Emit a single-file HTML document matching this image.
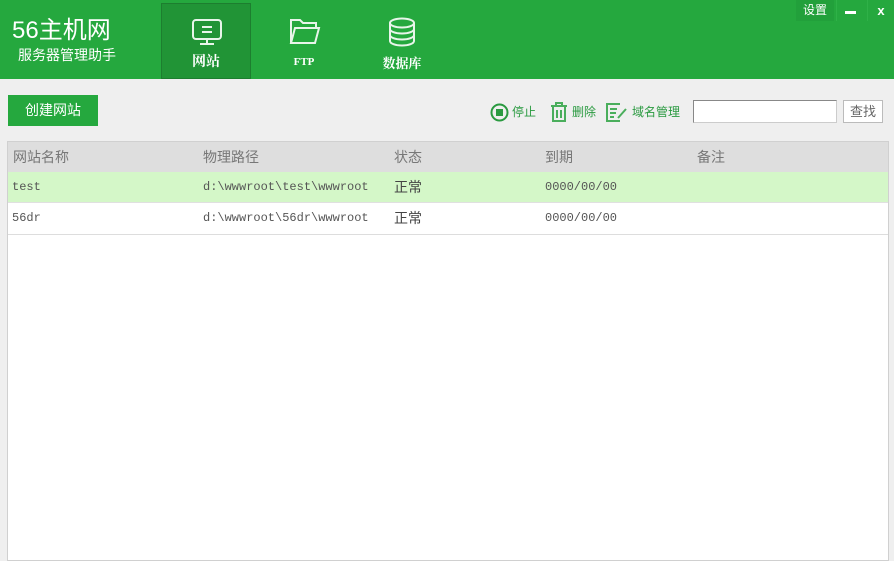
<!DOCTYPE html>
<html><head><meta charset="utf-8"><style>
*{margin:0;padding:0;box-sizing:border-box}
body{width:894px;height:549px;background:#efefef;position:relative;overflow:hidden;font-family:"Liberation Sans","Noto Sans CJK SC",sans-serif}
.hd{position:absolute;left:0;top:0;width:894px;height:79px;background:#25a83e}
.abs{position:absolute}
.logo{left:12px;top:10px;color:#fff;font-size:24px}
.sub{left:18px;top:45px;color:#fff;font-size:14px}
.tab{top:3px;width:90px;height:76px;color:#fff;text-align:center}
.act{left:161px;background:#219436;border:1px solid #1d7e2f}
.tl{position:absolute;width:100%;font-weight:bold;font-family:"Liberation Serif","Noto Serif CJK SC",serif}
.wb{top:0;height:21px;color:#fff;font-size:13px;text-align:center;line-height:21px;background:#22a03b}
.btn{left:8px;top:95px;width:90px;height:31px;background:#25a83e;color:#fff;font-size:14px;line-height:31px;text-align:center}
.tb{top:103px;font-size:12px;color:#2a9a40}
.tbl{left:7px;top:141px;width:882px;height:420px;background:#fff;border:1px solid #d0d0d0}
.row{position:absolute;left:0;width:880px;font-size:12px;color:#555;font-family:"Liberation Mono","Noto Sans CJK SC",monospace}
.row span{position:absolute;top:0}
.th{top:0;height:30px;line-height:30px;background:#dedede;color:#777;font-size:14px;font-family:"Liberation Sans","Noto Sans CJK SC",sans-serif}
.zh{font-size:14px;color:#444;font-family:"Noto Sans CJK SC",sans-serif}
</style></head><body>
<div class="hd"></div>
<div class="abs logo">56主机网</div>
<div class="abs sub">服务器管理助手</div>
<div class="abs tab act">
<svg class="abs" style="left:29px;top:14px" width="32" height="28" viewBox="0 0 32 28" fill="none" stroke="#e8f5ea" stroke-width="2"><rect x="2" y="2" width="28" height="19" rx="3"/><path d="M11 9h10M11 14h10M16 21v4M9 26h14"/></svg>
<div class="tl" style="top:47px;font-size:14px">网站</div></div>
<div class="abs tab" style="left:259px">
<svg class="abs" style="left:30px;top:14px" width="32" height="28" viewBox="0 0 32 28" fill="none" stroke="#e8f5ea" stroke-width="2"><path d="M2 26V3h9l3 3h13v5M2 26l4-15h24l-4 15z"/></svg>
<div class="tl" style="top:53px;font-size:11px">FTP</div></div>
<div class="abs tab" style="left:357px">
<svg class="abs" style="left:31px;top:14px" width="28" height="30" viewBox="0 0 28 30" fill="none" stroke="#e8f5ea" stroke-width="2"><ellipse cx="14" cy="6" rx="12" ry="4.5"/><path d="M2 6v18c0 2.5 5.4 4.5 12 4.5s12-2 12-4.5V6M2 12c0 2.5 5.4 4.5 12 4.5s12-2 12-4.5M2 18c0 2.5 5.4 4.5 12 4.5s12-2 12-4.5"/></svg>
<div class="tl" style="top:50px;font-size:13px">数据库</div></div>
<div class="abs wb" style="left:796px;width:38px;font-size:12px">设置</div>
<div class="abs" style="left:845px;top:11px;width:11px;height:3px;background:#fff"></div>
<div class="abs wb" style="left:836px;width:30px;background:transparent;border-left:1px solid #2fb148"></div>
<div class="abs wb" style="left:867px;width:27px;font-weight:bold;background:transparent;border-left:1px solid #2fb148">x</div>
<div class="abs btn">创建网站</div>
<svg class="abs" style="left:490px;top:103px" width="19" height="19" viewBox="0 0 19 19"><circle cx="9.5" cy="9.5" r="8" fill="none" stroke="#2a9a40" stroke-width="2"/><rect x="6" y="6" width="7" height="7" fill="#2a9a40"/></svg>
<div class="abs tb" style="left:512px">停止</div>
<svg class="abs" style="left:550px;top:102px" width="18" height="20" viewBox="0 0 18 20" fill="none" stroke="#4aae5c" stroke-width="2"><path d="M1 4h16M6 4V1h6v3M3 4v15h12V4M7 8v8M11 8v8"/></svg>
<div class="abs tb" style="left:572px">删除</div>
<svg class="abs" style="left:606px;top:102px" width="22" height="20" viewBox="0 0 22 20" fill="none" stroke="#4aae5c" stroke-width="2"><path d="M14 2H1v17h13M4 7h7M4 11h6M4 15h4M12 16l8-9"/></svg>
<div class="abs tb" style="left:632px">域名管理</div>
<div class="abs" style="left:693px;top:100px;width:144px;height:23px;background:#fff;border:1px solid #888;border-bottom-color:#ccc;border-right-color:#ccc"></div>
<div class="abs" style="left:843px;top:100px;width:40px;height:23px;background:#fff;border:1px solid #bbb;color:#666;font-size:13px;text-align:center;line-height:21px">查找</div>
<div class="abs tbl">
<div class="row th"><span style="left:5px">网站名称</span><span style="left:195px">物理路径</span><span style="left:386px">状态</span><span style="left:537px">到期</span><span style="left:689px">备注</span></div>
<div class="row" style="top:30px;height:31px;line-height:31px;background:#d4f7c8;border-bottom:1px solid #e0e0e0"><span style="left:4px">test</span><span style="left:195px">d:\wwwroot\test\wwwroot</span><span class="zh" style="left:386px">正常</span><span style="left:537px">0000/00/00</span></div>
<div class="row" style="top:61px;height:32px;line-height:31px;background:#fff;border-bottom:1px solid #ddd"><span style="left:4px">56dr</span><span style="left:195px">d:\wwwroot\56dr\wwwroot</span><span class="zh" style="left:386px">正常</span><span style="left:537px">0000/00/00</span></div>
</div>
</body></html>
